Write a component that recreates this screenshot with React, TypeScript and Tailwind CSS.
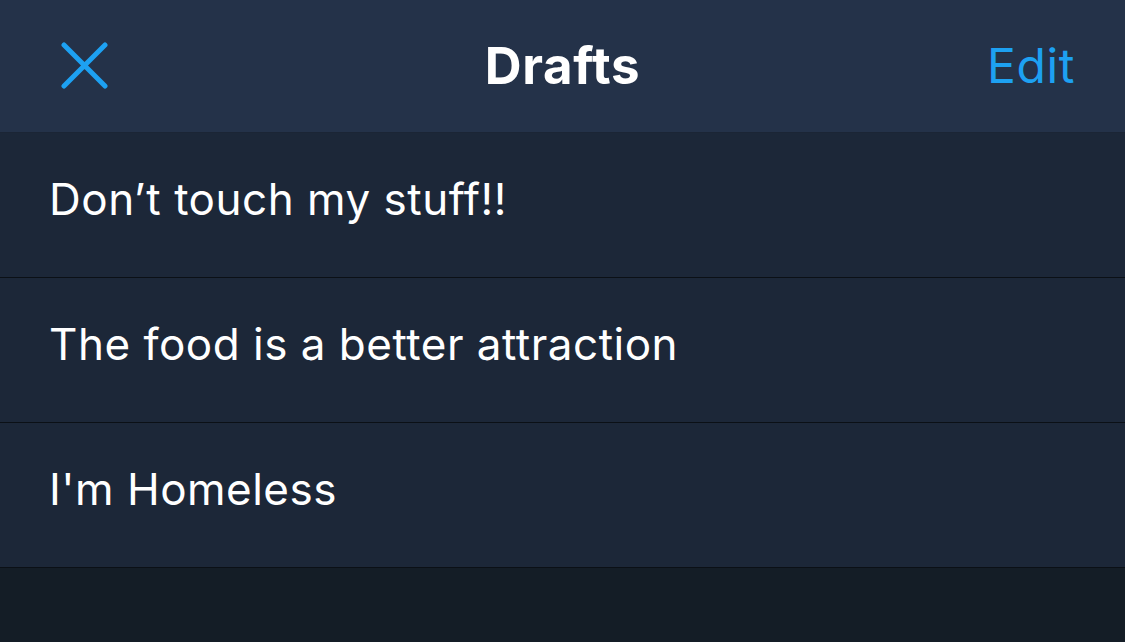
import React from 'react';

const drafts = ["Don\u2019t touch my stuff!!", 'The food is a better attraction', "I'm Homeless"];

export default function App() {
  return (
    <div className="h-[642px] w-full bg-[#141d26] font-['Inter',sans-serif] overflow-hidden">
      {/* header */}
      <header className="h-[133px] bg-[#243249] border-b border-[#1b2535] flex items-center justify-between pl-[60px] pr-[50px] relative">
        <button className="text-[#1da1f2]">
          <svg width="48" height="48" viewBox="0 0 48 48" fill="none" stroke="currentColor" strokeWidth="5" strokeLinecap="round">
            <path d="M4 3 L45 44 M45 3 L4 44" />
          </svg>
        </button>
        <h1 className="absolute left-1/2 -translate-x-1/2 text-white text-[51px] font-bold tracking-[0.6px]">Drafts</h1>
        <button className="text-[#1da1f2] text-[48px] leading-none tracking-[0.6px]">Edit</button>
      </header>

      {/* list */}
      <ul>
        {drafts.map((d, i) => (
          <li key={i} className="h-[145px] bg-[#1c2738] border-b border-[#0b1016] flex items-center pl-[49px] pb-[12px]">
            <span className="text-white text-[44px] leading-none tracking-[0.5px]">{d}</span>
          </li>
        ))}
      </ul>
    </div>
  );
}
